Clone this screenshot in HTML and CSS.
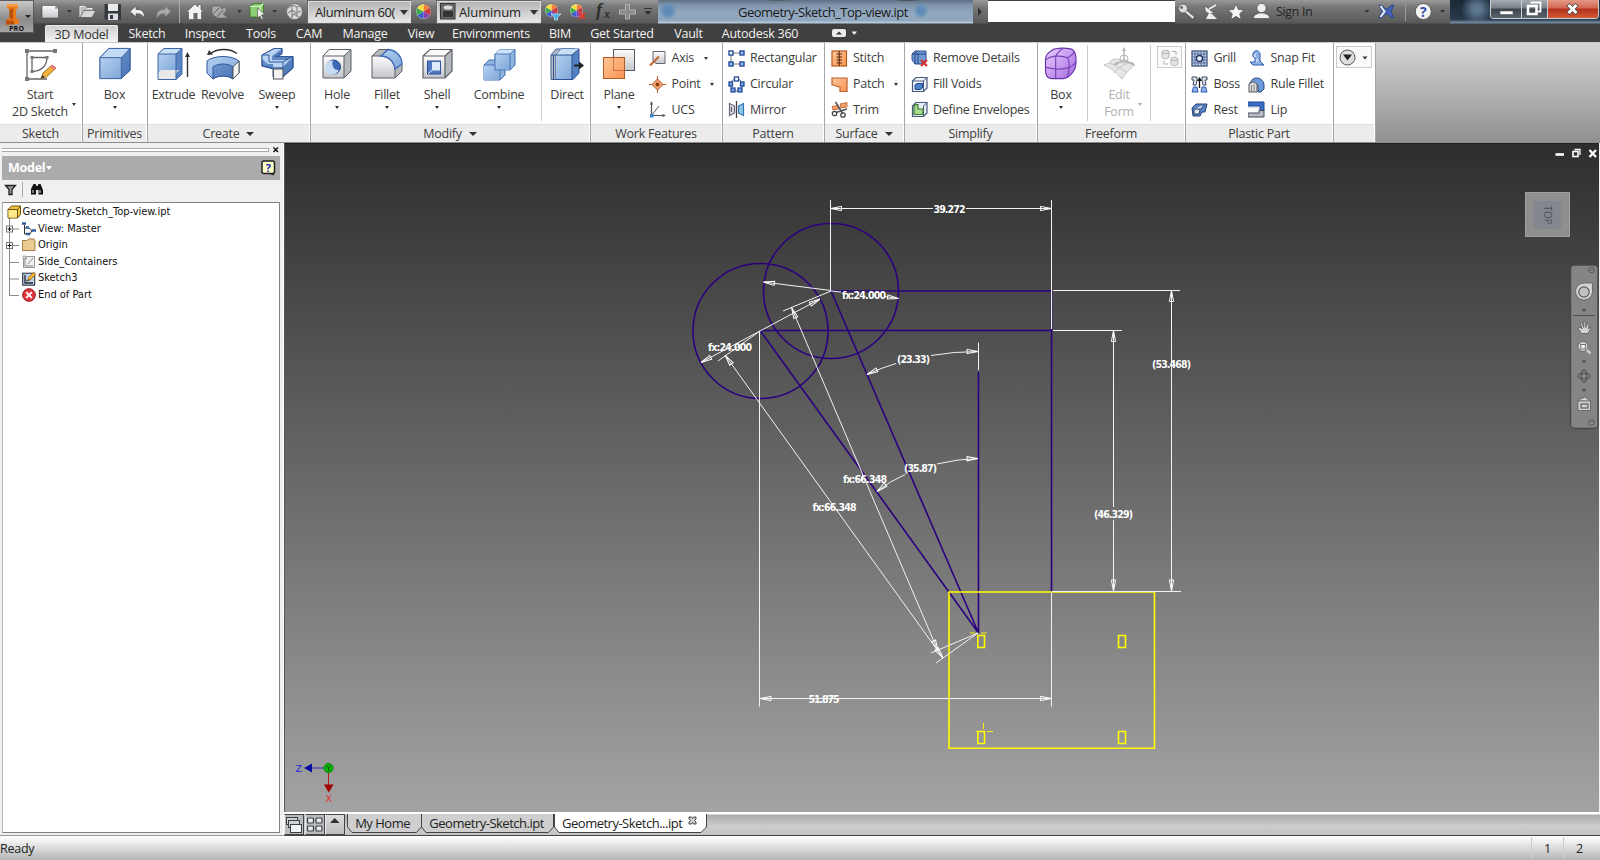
FILE: index.html
```html
<!DOCTYPE html>
<html lang="en">
<head>
<meta charset="utf-8">
<title>Geometry-Sketch_Top-view.ipt</title>
<link rel="stylesheet" href="styles.css">
</head>
<body>
<svg width="0" height="0" class="defs">
  <defs>
    <linearGradient id="blue" x1="0" y1="0" x2="1" y2="1"><stop offset="0" stop-color="#b4d0f0"/><stop offset="1" stop-color="#7fa6d8"/></linearGradient>
    <linearGradient id="blueD" x1="0" y1="0" x2="1" y2="1"><stop offset="0" stop-color="#6f97d0"/><stop offset="1" stop-color="#4a74b4"/></linearGradient>
    <linearGradient id="metal" x1="0" y1="0" x2="0" y2="1"><stop offset="0" stop-color="#fdfdfd"/><stop offset="1" stop-color="#c3c6ca"/></linearGradient>
    <linearGradient id="orange" x1="0" y1="0" x2="1" y2="1"><stop offset="0" stop-color="#ffc79a"/><stop offset="1" stop-color="#f79352"/></linearGradient>
    <linearGradient id="purple" x1="0" y1="0" x2="1" y2="1"><stop offset="0" stop-color="#ead0ff"/><stop offset="1" stop-color="#a468e0"/></linearGradient>
    <symbol id="wheel" viewBox="0 0 18 18">
      <circle cx="9" cy="9" r="8.3" fill="#eee" stroke="#555"/>
      <path d="M9 9V1.500A7.500 7.500 0 0 1 15.500 5.200Z" fill="#f0813a"/>
      <path d="M9 9L15.500 5.200A7.500 7.500 0 0 1 15.500 12.800Z" fill="#c93a3a"/>
      <path d="M9 9L15.500 12.800A7.500 7.500 0 0 1 9 16.500Z" fill="#8b3fb5"/>
      <path d="M9 9V16.500A7.500 7.500 0 0 1 2.500 12.800Z" fill="#3b5fd0"/>
      <path d="M9 9L2.500 12.800A7.500 7.500 0 0 1 2.500 5.200Z" fill="#3fae4c"/>
      <path d="M9 9L2.500 5.200A7.500 7.500 0 0 1 9 1.500Z" fill="#f3dc42"/>
    </symbol>
    <marker id="arr" viewBox="-13 -4 15 8" refX="0" refY="0" markerWidth="15" markerHeight="8" markerUnits="userSpaceOnUse" orient="auto-start-reverse"><path d="M0 0L-11 -2.100V2.100Z" fill="none" stroke="#fff" stroke-width="1"/></marker>
  </defs>
</svg>

<header class="titlebar">
  <div class="appbtn">
    <svg width="33" height="33" viewBox="0 0 33 33">
      <path d="M7 3H18V7L16 8.500V17L19 19V23H14L6 23.500V19L9.500 17V8.500L7 7Z" fill="#e87a1c"/>
      <path d="M9.500 8.500L13 7V19L9.500 17ZM6 19L14 20V23.500H6Z" fill="#b9500d"/>
      <path d="M7 3H18V5.500H7Z" fill="#ff9d42"/>
      <path d="M25 14H31L28 17Z" fill="#223"/>
    </svg>
    <span class="pro">PRO</span>
  </div>
  <svg class="strip" width="274" height="24" viewBox="34 0 274 24">
    <path d="M42 5.500H55L58.500 9V18H42Z" fill="url(#metal)" stroke="#444" stroke-width=".6"/><path d="M55 5.500V9H58.500Z" fill="#aaa"/>
    <path d="M67 10H72L69.500 13Z" fill="#3a3a3a"/>
    <path d="M80 17V6.500H85L87 8.500H92V10.500" fill="#b9b9b9" stroke="#eee"/><path d="M80 17.500L84 10.500H96L92 17.500Z" fill="#d8d8d8" stroke="#444" stroke-width=".6"/>
    <path d="M104.500 4H121V20H106L104.500 18.500Z" fill="#35383d"/><rect x="108" y="4" width="10" height="7" fill="#e9e9e9"/><rect x="108" y="13.500" width="10" height="6.500" fill="#d9dce0"/><rect x="110" y="15" width="3" height="4" fill="#35383d"/>
    <path d="M130 11.500L136 6V9.500C142 9 145 12 144 18C142.500 14.500 140 13.500 136 13.800V17Z" fill="#eee" stroke="#444" stroke-width=".6"/>
    <path d="M171 11.500L165 6V9.500C159 9 156 12 157 18C158.500 14.500 161 13.500 165 13.800V17Z" fill="#a9a9a9" stroke="#777" stroke-width=".6"/>
    <path d="M179.500 0V23" stroke="#a8a8a8"/>
    <path d="M186.500 12L195 4L198 7V4.500H201V9.500L203.500 12H201.500V19.500H188.500V12Z" fill="#f2f2f2" stroke="#444" stroke-width=".6"/><rect x="193.500" y="13" width="4" height="6.500" fill="#666"/>
    <path d="M212 6H219L222 9L226 6V12L223 14L228 18H217L212 14Z" fill="#a9a9a9" stroke="#5c5c5c" stroke-width=".6"/><path d="M213 14L219 8M217 17L223 10" stroke="#5c5c5c"/>
    <path d="M237 10H242L239.500 13Z" fill="#3a3a3a"/>
    <path d="M250 6L254 3.500H263.500V14L260 17H250Z" fill="#8ccf70" stroke="#2e6b20" stroke-width=".8"/><path d="M250 6.500H260V17M260 6.500L263.500 3.500" fill="none" stroke="#d6f5c8" stroke-width="1.200"/>
    <path d="M257.500 8L265 14.500L261.500 15L263.500 19L261.500 19.500L260 16L257.500 18Z" fill="#eee" stroke="#444" stroke-width=".6"/>
    <path d="M272 10H277L274.500 13Z" fill="#3a3a3a"/>
    <circle cx="294.500" cy="11.500" r="8" fill="#dadada" stroke="#6c6c6c"/><path d="M288 8L292 5L297 7L301 6M288 13L292 10L296 13L301 11M291 17L294 14L299 17M292 5V18M297 7V17" fill="none" stroke="#888" stroke-width="1.100"/>
  </svg>
  <div class="combo c1"><span>Aluminum 60(</span><i class="dd"></i></div>
  <svg class="strip" width="26" height="24"><use href="#wheel" x="4" y="3" width="17" height="17"/></svg>
  <div class="combo c2">
    <svg width="16" height="18"><rect x=".5" y=".5" width="14.500" height="15.500" fill="#6a6a6a" stroke="#333"/><ellipse cx="8" cy="4.500" rx="4.500" ry="2" fill="#ddd"/><rect x="3" y="8" width="10" height="6" fill="#333"/></svg>
    <span>Aluminum</span><i class="dd"></i></div>
  <svg class="strip" width="117" height="24" viewBox="541 0 117 24">
    <use href="#wheel" x="544" y="3" width="15" height="15"/><path d="M551 14H561L557.500 17V20H554.500V17Z" fill="#35b6ea" stroke="#eee" stroke-width=".6"/>
    <use href="#wheel" x="569" y="3" width="15" height="15"/><path d="M579 13L585 19M585 13L579 19" stroke="#e23b2a" stroke-width="2"/>
    <text x="596" y="16" class="fx">f</text><text x="604" y="18" class="fx sm">x</text>
    <path d="M625.500 4.500H629.500V10H635.500V14H629.500V19H625.500V14H619.500V10H625.500Z" fill="#8a8a8a" stroke="#b2b2b2"/>
    <path d="M644 8.500H652" stroke="#333"/><path d="M644.500 11H651.500L648 15Z" fill="#333"/>
  </svg>
  <div class="glass">Geometry-Sketch_Top-view.ipt</div>
  <svg class="strip" width="15" height="24"><path d="M5 7.500V16L9 11.700Z" fill="#333"/></svg>
  <div class="search"></div>
  <div class="strip user">
    <svg width="101" height="24" viewBox="1175 0 101 24">
      <circle cx="1183" cy="8.500" r="4.500" fill="#ddd" stroke="#444" stroke-width=".7"/><circle cx="1181.500" cy="7.500" r="1.400" fill="#666"/><path d="M1186 11.500L1194 18.500" stroke="#444" stroke-width="4"/><path d="M1186 11.500L1193.500 18" stroke="#ddd" stroke-width="2.600"/>
      <path d="M1205 6C1204 12 1208 15 1214 13Z" fill="#eee" stroke="#444" stroke-width=".6"/><path d="M1209 9L1216 5" stroke="#eee" stroke-width="1.500"/><path d="M1209 13L1206 19H1217L1212 14Z" fill="#eee"/>
      <path d="M1236 4L1238.300 9.500L1244 10L1239.700 13.700L1241 19.500L1236 16.300L1231 19.500L1232.300 13.700L1228 10L1233.700 9.500Z" fill="#f4f4f4" stroke="#444" stroke-width=".6"/>
      <circle cx="1261.500" cy="8" r="4.600" fill="#eee" stroke="#444" stroke-width=".6"/><path d="M1253.500 18.500C1253.500 14 1257 14.500 1259 13H1264C1266 14.500 1269.500 14 1269.500 18.500Z" fill="#eee" stroke="#444" stroke-width=".6"/>
    </svg>
    <span>Sign In</span>
  </div>
  <svg class="strip" width="90" height="24" viewBox="1360 0 90 24">
    <path d="M1364.500 10H1369.500L1367 13Z" fill="#3a3a3a"/>
    <path d="M1379 5C1384 5 1384 9 1386.500 9C1389 9 1389 5 1394 5L1391 11.500L1394 18C1389 18 1389 14 1386.500 14C1384 14 1384 18 1379 18L1382 11.500Z" fill="#3f62b8" stroke="#28407e" stroke-width=".8"/><path d="M1380.500 6L1384.500 11.500L1380.500 17" fill="none" stroke="#e9edf6" stroke-width="2"/>
    <path d="M1405.500 3V21" stroke="#999"/>
    <circle cx="1423.300" cy="11.500" r="8" fill="#f3f3f3" stroke="#555"/><text x="1423.300" y="16.500" class="q">?</text>
    <path d="M1440 10H1445L1442.500 13Z" fill="#333"/>
  </svg>
  <div class="glass dark">
    <div class="winbtns">
      <span class="wb"><svg width="29" height="18"><rect x="9" y="11" width="13" height="3.500" fill="#fff" stroke="#555" stroke-width=".6"/></svg></span>
      <span class="wb mid"><svg width="25" height="18"><path d="M8.500 2.500H18.500V11.500H16" fill="none" stroke="#fff" stroke-width="1.800"/><path d="M6 6H14.500V14H6Z" fill="none" stroke="#fff" stroke-width="2.600"/></svg></span>
      <span class="wb close"><svg width="49" height="18"><path d="M20 4.500L29 13.500M29 4.500L20 13.500" stroke="#444" stroke-width="4.400"/><path d="M20.500 5L28.500 13M28.500 5L20.500 13" stroke="#fff" stroke-width="3"/></svg></span>
    </div>
  </div>
</header>

<nav class="tabs">
  <span></span><b>3D Model</b><span>Sketch</span><span>Inspect</span><span>Tools</span><span>CAM</span><span>Manage</span><span>View</span><span>Environments</span><span>BIM</span><span>Get Started</span><span>Vault</span><span>Autodesk 360</span>
  <svg width="60" height="18"><rect x="25" y="5" width="14" height="8" rx="2" fill="#e9e9ee"/><path d="M29 10.500H35L32 7.500Z" fill="#333"/><path d="M44.500 7.500H50L47.200 11Z" fill="#eee"/></svg>
</nav>

<section class="ribbon">
  <div class="panel p-sketch"><div class="body">
    <div class="big"><svg width="34" height="34" viewBox="0 0 34 34"><path d="M4 4H31.500M4 4V32H24" fill="none" stroke="#666" stroke-width="1.300"/><path d="M9 10.500H24C24 18 19 24.500 9 24.500Z" fill="none" stroke="#666" stroke-width="1.300"/><g fill="#777"><rect x="2" y="2" width="4" height="4"/><rect x="30" y="2" width="4" height="4"/><rect x="2" y="30" width="4" height="4"/><rect x="7.500" y="9" width="3" height="3"/><rect x="22.500" y="9" width="3" height="3"/><rect x="7.500" y="23" width="3" height="3"/></g><path d="M18 31.500L20 26L29 18L33 21L23.500 30Z" fill="#f3b13c" stroke="#8a5a18" stroke-width=".8"/><path d="M29 18L33 21L31 23L27 19.800Z" fill="#e78"/><path d="M18 31.500L19.500 28L21.500 30Z" fill="#333"/></svg>
      <span>Start<br>2D Sketch</span><i class="dn side"></i></div>
  </div><footer>Sketch</footer></div>

  <div class="panel p-prim"><div class="body">
    <div class="big"><svg width="34" height="34" viewBox="0 0 35 35"><path d="M2 11L11 1.500H33V24L24 32.500H2Z" fill="url(#blueD)" stroke="#3f66a6"/><path d="M2 11L11 1.500H33L24 11Z" fill="#c2dcf5"/><path d="M2 11H24V32.500H2Z" fill="url(#blue)"/><path d="M2 11L11 1.500H33V24L24 32.500H2ZM2 11H24V32.500M24 11L33 1.500" fill="none" stroke="#3f66a6"/></svg><span>Box</span><i class="dn"></i></div>
  </div><footer>Primitives</footer></div>

  <div class="panel p-create"><div class="body">
    <div class="big w48"><svg width="34" height="34" viewBox="0 0 34 34"><path d="M1 7L7 1.500H25V27L19 32.500H1Z" fill="#5c85c2"/><path d="M1 7H19V26H1Z" fill="url(#blue)"/><path d="M1 7L7 1.500H25L19 7Z" fill="#c9e0f6"/><path d="M1 26L4 23H22L19 27V32.500H1Z" fill="#e9e9e9"/><path d="M1 7L7 1.500H25V27L19 32.500H1ZM1 7H19V32.500M19 7L25 1.500" fill="none" stroke="#3f66a6"/><path d="M30.500 30V8" stroke="#333" stroke-width="1.400"/><path d="M28 10L30.500 5L33 10Z" fill="#333"/></svg><span>Extrude</span></div>
    <div class="big w49"><svg width="34" height="34" viewBox="0 0 34 34"><path d="M1 14C8 8 26 8 33 14V26L27 32C22 28 12 28 7 32L1 26Z" fill="url(#blue)" stroke="#31589b"/><path d="M7 20C12 16 22 16 27 20V32C22 28 12 28 7 32Z" fill="url(#blueD)" stroke="#31589b"/><path d="M27 20L33 14V26L27 32Z" fill="#f4f4f4" stroke="#555"/><path d="M31 6.500C24 1 12 1 4 6.500" fill="none" stroke="#333" stroke-width="1.500"/><path d="M1 8L3 3L7 7.500Z" fill="#333"/></svg><span>Revolve</span></div>
    <div class="big w60"><svg width="34" height="34" viewBox="0 0 34 34"><path d="M2 8L14 1.500H22V7L18 9.500H33V21L23 30H13V22L2 19Z" fill="url(#blueD)" stroke="#31589b"/><path d="M2 8L14 1.500H22L12 9V13H27L33 9.500L23 20H13V17H8L2 12Z" fill="#b9d3f0"/><path d="M2 8L14 1.500H22V5L15 9.500H33V21L23 29M2 8V19L13 21M2 8H9V15H23L33 9.500M23 15V22" fill="none" stroke="#31589b"/><rect x="13.500" y="22" width="9.500" height="10" fill="#f2f2f2" stroke="#555"/></svg><span>Sweep</span><i class="dn"></i></div>
  </div><footer>Create <i class="fd"></i></footer></div>

  <div class="panel p-modify"><div class="body">
    <div class="big w50"><svg width="34" height="34" viewBox="0 0 34 34"><path d="M3 9L9 2.500H31V24L24 31H3Z" fill="#b5b8bd"/><path d="M3 9H24V31H3Z" fill="url(#metal)"/><path d="M3 9L9 2.500H31L24 9Z" fill="#fafafa"/><path d="M3 9L9 2.500H31V24L24 31H3ZM24 9V31M24 9L31 2.500M3 9H24" fill="none" stroke="#5c5f66"/><circle cx="13.500" cy="20" r="7" fill="#3d68b8" stroke="#274a8c"/><path d="M13 13.500A7 7 0 1 0 19 23C14 24 11 18 13 13.500Z" fill="#c6dcf4"/></svg><span>Hole</span><i class="dn"></i></div>
    <div class="big w50"><svg width="34" height="34" viewBox="0 0 34 34"><path d="M2 9L9 2.500H19C26 3 32 9 32 17V24L25 31H2Z" fill="#b5b8bd"/><path d="M2 31V9H11C19 10 24 15 25 22V31Z" fill="url(#metal)" stroke="#5c5f66"/><path d="M11 9L18 2.500C26 3 32 9 32 17L25 22C24 14 18 9 11 9Z" fill="url(#blue)" stroke="#3c6abf" stroke-width="1.300"/><path d="M2 9L9 2.500H18M32 17V24L25 31" fill="none" stroke="#5c5f66"/></svg><span>Fillet</span><i class="dn"></i></div>
    <div class="big w50"><svg width="34" height="34" viewBox="0 0 34 34"><path d="M3 9L10 2.500H32V24L25 31H3Z" fill="#b5b8bd"/><path d="M3 9H25V31H3Z" fill="url(#metal)"/><path d="M3 9L10 2.500H32L25 9Z" fill="#fafafa"/><path d="M3 9L10 2.500H32V24L25 31H3ZM25 9V31M25 9L32 2.500M3 9H25" fill="none" stroke="#5c5f66" stroke-width="1.200"/><rect x="7.500" y="14" width="13" height="13" fill="#4f78c0" stroke="#2e5299"/><rect x="12" y="15" width="8" height="8" fill="#dcebf9"/><path d="M8 27L12 23H20" fill="none" stroke="#dcebf9"/></svg><span>Shell</span><i class="dn"></i></div>
    <div class="big w74"><svg width="34" height="34" viewBox="0 0 34 34"><path d="M13 7L18 2.500H33V18L28 23H23V28L18 33H2V18L7 13H13Z" fill="#8fb4de" stroke="#4470b4"/><path d="M2 18H13V23H18V33H2Z" fill="url(#blue)"/><path d="M13 7H28V23H13Z" fill="url(#blue)"/><path d="M13 7L18 2.500H33L28 7Z" fill="#cfe3f7"/><path d="M13 7H28V23M28 7L33 2.500M13 7V18H2M13 18V23H23M18 23V33" fill="none" stroke="#4470b4" stroke-width=".9"/></svg><span>Combine</span><i class="dn"></i></div>
    <i class="vsep"></i>
    <div class="big w50"><svg width="34" height="34" viewBox="0 0 34 34"><path d="M1 8L6 2H25V27L20 32.500H1Z" fill="#b7bcc4" stroke="#3d5f94"/><path d="M6 8L11 2H29V26L23 32.500H6Z" fill="#5580c2" stroke="#2d5294"/><path d="M6 8H22V32H6Z" fill="url(#blue)"/><path d="M6 8L11 2H29L22 8Z" fill="#c9dff5"/><path d="M1 8H22V32M22 8L29 2M3.500 8V32" fill="none" stroke="#2d5294"/><path d="M24 18.500H30" stroke="#222" stroke-width="2"/><path d="M29 14.500L34 18.500L29 22.500Z" fill="#222"/></svg><span>Direct</span></div>
  </div><footer>Modify <i class="fd"></i></footer></div>

  <div class="panel p-work"><div class="body">
    <div class="big w56"><svg width="34" height="34" viewBox="0 0 34 34"><rect x="11.500" y="2.500" width="21" height="21" fill="url(#metal)" stroke="#555c66"/><rect x="1.500" y="10.500" width="21" height="21" fill="url(#orange)" stroke="#b45a20"/><path d="M11.500 10.500V23.500H22.500" fill="none" stroke="#b9602a" stroke-opacity=".7"/></svg><span>Plane</span><i class="dn"></i></div>
    <div class="col">
      <div class="row"><svg width="17" height="17"><path d="M4 1.500H16V13.500H7L4 11Z" fill="url(#metal)" stroke="#667"/><path d="M1 15.500L10 6.500" stroke="#c4622c" stroke-width="2"/></svg><span>Axis</span><i class="dr"></i></div>
      <div class="row"><svg width="17" height="17"><path d="M8.500 0V17M0 8.500H17" stroke="#b8622e"/><path d="M8.500 3L14 8.500L8.500 14L3 8.500Z" fill="#f6a878" stroke="#a9501c"/><circle cx="8.500" cy="8.500" r="2" fill="#8a3c10"/></svg><span>Point</span><i class="dr"></i></div>
      <div class="row"><svg width="17" height="17"><path d="M2.500 1V14.500H16" fill="none" stroke="#555" stroke-width="1.200"/><path d="M2.500 14.500L10 5" stroke="#555"/><path d="M1 3.500L2.500 0L4 3.500M13.500 13L17 14.500L13.500 16" fill="#555"/><rect x="1" y="13" width="3.500" height="3.500" fill="#3787d8"/></svg><span>UCS</span></div>
    </div>
  </div><footer>Work Features</footer></div>

  <div class="panel p-pattern"><div class="body"><div class="col">
    <div class="row"><svg width="17" height="17"><path d="M3 3H14M3 3V14H14" fill="none" stroke="#777"/><g fill="#fff" stroke="#234a9c" stroke-width="1.400"><rect x="1" y="1" width="4" height="4"/><rect x="12" y="1" width="4" height="4" fill="#9cc0f0"/><rect x="1" y="12" width="4" height="4" fill="#9cc0f0"/><rect x="12" y="12" width="4" height="4" fill="#9cc0f0"/></g></svg><span>Rectangular</span></div>
    <div class="row"><svg width="17" height="17"><circle cx="8.500" cy="9" r="6" fill="none" stroke="#456"/><g fill="#7ea6e4" stroke="#234a9c" stroke-width="1.300"><rect x="6.500" y="1" width="4" height="4" fill="#fff"/><rect x="1" y="6" width="3.500" height="4"/><rect x="12.500" y="6" width="3.500" height="4"/><rect x="3" y="12" width="4" height="4"/><rect x="10" y="12" width="4" height="4"/></g></svg><span>Circular</span></div>
    <div class="row"><svg width="17" height="17"><path d="M1.500 2.500L6.500 5V12L1.500 14.500ZM3.500 6V11" fill="#ddd" stroke="#667" stroke-width="1.200"/><path d="M8.500 0V17" stroke="#444" stroke-width="1.300"/><path d="M15.500 2.500L10.500 5V12L15.500 14.500Z" fill="#8fc4ea" stroke="#3477b0" stroke-width="1.200"/></svg><span>Mirror</span></div>
  </div></div><footer>Pattern</footer></div>

  <div class="panel p-surface"><div class="body"><div class="col">
    <div class="row"><svg width="17" height="17"><rect x="1" y="1" width="14.500" height="15" fill="url(#orange)" stroke="#b55a1e" stroke-width="1.200"/><path d="M8.200 1V16M5.500 4H11M5.500 7H11M5.500 10H11M5.500 13H11" stroke="#5a2c10" stroke-width="1.100"/></svg><span>Stitch</span></div>
    <div class="row"><svg width="17" height="17"><path d="M1 2H16V15.500H9V11C5 11 5 9 1 9Z" fill="url(#orange)" stroke="#b9602a" stroke-width="1.200"/></svg><span>Patch</span><i class="dr"></i></div>
    <div class="row"><svg width="17" height="17"><path d="M1 5.500L6 4.500L8 8L2 9ZM9 3L16 1.500V6L10 7Z" fill="#f5a06a" stroke="#b9602a" stroke-width=".8"/><path d="M4.500 1L11.500 12M16 8L5 11.500" stroke="#555" stroke-width="1.600"/><circle cx="3.500" cy="12.500" r="2.200" fill="none" stroke="#444" stroke-width="1.300"/><circle cx="12" cy="14" r="2.200" fill="none" stroke="#444" stroke-width="1.300"/></svg><span>Trim</span></div>
  </div></div><footer>Surface <i class="fd"></i></footer></div>

  <div class="panel p-simplify"><div class="body"><div class="col">
    <div class="row"><svg width="17" height="17"><path d="M1 4L4 1H15V9L13 14H4L1 10Z" fill="#7099d4" stroke="#2c4f8e"/><path d="M4 4H15M4 4V14M7 4V14M1 4H4L6 1" fill="none" stroke="#25427a"/><path d="M10 10L16 16M16 10L10 16" stroke="#d0302a" stroke-width="2.200"/></svg><span>Remove Details</span></div>
    <div class="row"><svg width="17" height="17"><path d="M1.500 5L5 1.500H16V12L12.500 15.500H1.500Z" fill="#f3f5f8" stroke="#465a7c" stroke-width="1.200"/><path d="M1.500 5H12.500V15.500M12.500 5L16 1.500" fill="none" stroke="#465a7c"/><path d="M4 9L6 7.500H11.500V12L9.500 13.500H4Z" fill="#4f80cc" stroke="#1d4490"/></svg><span>Fill Voids</span></div>
    <div class="row"><svg width="17" height="17"><path d="M1.500 5L5 1.500H16V12L12.500 15.500H1.500Z" fill="#e6edf5" stroke="#465a7c" stroke-width="1.200"/><path d="M12.500 5V15.500M12.500 5L16 1.500" stroke="#465a7c"/><path d="M3 5L5 3.500H7V8H12V13.500H3Z" fill="#a8dc90" stroke="#3b7d2c" stroke-width="1.200"/></svg><span>Define Envelopes</span></div>
  </div></div><footer>Simplify</footer></div>

  <div class="panel p-free"><div class="body">
    <div class="big w46"><svg width="34" height="34" viewBox="0 0 35 35"><path d="M8 3.500C12 .5 26 .5 30 3C34 7 33.500 20 31 24C28 29 25 32 20 32.500H8C2 32 1.500 28 1.500 22V14C1.500 8 4 6 8 3.500Z" fill="url(#purple)" stroke="#6a35a8" stroke-width="1.200"/><path d="M2 13C8 8 20 9 24 11C27 15 26 28 23 32M24 11C28 9 31 6 31 4M12 32C12 22 12 12 12 10C13 6 18 2 20 1.500M2 21C10 23 20 23 26 21C30 19 33 16 33 15" fill="none" stroke="#7a44b8" stroke-width="1.200"/></svg><span>Box</span><i class="dn"></i></div>
    <i class="vsep gapl"></i>
    <div class="big w62 off"><svg width="34" height="34" viewBox="0 0 34 34"><path d="M2 18C7 17 9 13 12 12C18 12 24 15 33 18C29 21 24 25 20 32C15 26 10 22 2 18Z" fill="#e6e6e6" stroke="#c4c4c4"/><path d="M7 16C15 18 21 23 25 26M27 16C20 18 14 23 11 26" fill="none" stroke="#c4c4c4"/><path d="M22 3V13M22 13L14 17M22 13L31 17" stroke="#b4b4b4" stroke-width="1.400"/><circle cx="22" cy="12" r="4" fill="none" stroke="#b4b4b4"/><path d="M20 4L22 0L24 4ZM11 18L15 14.500L16 17.500ZM33 18.500L29 17.500L30.500 14.500Z" fill="#b4b4b4"/></svg><span>Edit<br>Form</span><i class="dn side"></i></div>
    <i class="vsep"></i>
    <div class="minibox"><svg width="24" height="22"><g fill="#e4e4e4" stroke="#b4b4b4"><path d="M4 5V10C4 12 11 12 11 10V5"/><ellipse cx="7.500" cy="5" rx="3.500" ry="1.700"/><path d="M13 12V17C13 19 20 19 20 17V12"/><ellipse cx="16.500" cy="12" rx="3.500" ry="1.700"/></g><path d="M14 4.500H18V8M6 13.500V17H10" fill="none" stroke="#b4b4b4"/></svg></div>
  </div><footer>Freeform</footer></div>

  <div class="panel p-plastic"><div class="body">
    <div class="col a">
      <div class="row"><svg width="17" height="17"><rect x="1" y="1" width="15" height="15" fill="#c5d6ee" stroke="#33486e" stroke-width="1.200"/><path d="M4 1V16M7 1V16M10 1V16M13 1V16M1 4H16M1 7H16M1 10H16M1 13H16" stroke="#4a6290" stroke-width=".9"/><circle cx="8.500" cy="8.500" r="3" fill="#e9f0fa" stroke="#20365f" stroke-width="1.300"/></svg><span>Grill</span></div>
      <div class="row"><svg width="17" height="17"><path d="M1 1H6V4L5 9H2L3 4H1ZM16 1H11V4L12 9H15L14 4H16Z" fill="#dfe4ec" stroke="#3f4c66"/><path d="M8.500 12V3" stroke="#111" stroke-width="1.300"/><path d="M6 5L8.500 1L11 5Z" fill="#111"/><path d="M2.500 11H6L7 16H1ZM11 11H14.500L16 16H10Z" fill="#8fb4f0" stroke="#2c56ac"/></svg><span>Boss</span></div>
      <div class="row"><svg width="17" height="17"><path d="M1 7L5 3H16L14 11H11L9 15H2Z" fill="#5a84c8" stroke="#2b426e"/><path d="M3 8H10L13 4M3 8V13H8L9 9" fill="#dfe6f0" stroke="#2b426e"/></svg><span>Rest</span></div>
    </div>
    <div class="col b">
      <div class="row"><svg width="17" height="17"><path d="M7 1C10 0 12 2 12 4V11L16 15H5L2 12H7V8C4 7 4 3 7 1Z" fill="#8db2e8" stroke="#305ba8"/><path d="M7 4V7M9 9V12" stroke="#fff"/></svg><span>Snap Fit</span></div>
      <div class="row"><svg width="17" height="17"><path d="M1 8L5 3C10 0 16 4 16 9V13L13 16H10V10C10 7 5 7 5 10" fill="#6d9adb" stroke="#26488a"/><path d="M1 8L4 6C8 6 9 8 9 10V16H1Z" fill="#dcdcdc" stroke="#555"/><path d="M3.500 9V16M6 8V16" stroke="#888"/></svg><span>Rule Fillet</span></div>
      <div class="row"><svg width="17" height="17"><path d="M0 1H16V10H12V5H0Z" fill="#3b70c8" stroke="#1d4690"/><path d="M0 12H11V9.500H16V16H0Z" fill="#b9bcc2" stroke="#444c5a"/><path d="M0 6.500H10V9.500" fill="none" stroke="#d8dde6"/></svg><span>Lip</span></div>
    </div>
  </div><footer>Plastic Part</footer></div>

  <div class="panel p-more"><div class="body"><div class="minibox wide"><svg width="35" height="21"><circle cx="10.500" cy="10.500" r="7.500" fill="#dedede" stroke="#555"/><path d="M6 7.500H15L10.500 13.500Z" fill="#222"/><path d="M25.500 9.500H30.500L28 12.500Z" fill="#333"/></svg></div></div><footer></footer></div>
</section>

<main>
  <aside>
    <div class="grip"><i></i><svg width="8" height="8"><path d="M1.500 1.500L6 6M6 1.500L1.500 6" stroke="#111" stroke-width="1.500"/></svg></div>
    <div class="mhead"><span>Model <i></i></span><svg width="16" height="16"><rect x="1" y="1" width="12.500" height="12.500" rx="2" fill="#ffffc8" stroke="#222" stroke-width="1.500"/><path d="M9 14L13 15.500V13Z" fill="#222"/><text x="7.200" y="11.800" class="hq">?</text></svg></div>
    <div class="mtools"><svg width="50" height="20"><path d="M3.500 5.500H13.500L10 9.500V14.500H7V9.500Z" fill="#999" stroke="#222" stroke-width="1.300"/><path d="M20.500 2V17" stroke="#aaa"/><path d="M29 9L31.500 4H33.500L34.500 6H35.500L36.500 4H38.500L41 10V14.500H36.500V10H34V14.500H29V10Z" fill="#111"/><path d="M31 10V13M38 10V13" stroke="#ddd"/></svg></div>
    <div class="tree">
      <svg class="lines" width="20" height="102"><path d="M6.500 10V92.500H16M6.500 26H16M6.500 42.500H16M6.500 59.500H16M6.500 76H16" fill="none" stroke="#8a8a8a"/><g fill="#fff" stroke="#777"><rect x="3.500" y="23" width="6" height="6"/><rect x="3.500" y="39.500" width="6" height="6"/></g><path d="M4.500 26H8.500M6.500 24V28M4.500 42.500H8.500M6.500 40.500V44.500" stroke="#111"/></svg>
      <div class="node root"><svg width="15" height="14"><path d="M1 4.500L4.500 1H13.500V9.500L10.500 13H1Z" fill="#f2c53a" stroke="#6a5010"/><path d="M1.500 5H10V12.500H1.500Z" fill="#ffe98a"/><path d="M1 4.500H10.500V13M10.500 4.500L13.500 1" fill="none" stroke="#6a5010"/></svg><span>Geometry-Sketch_Top-view.ipt</span></div>
      <div class="node"><svg width="14" height="14"><path d="M0 1.500H4M4 5.500H7M4 12H8M10 8.500H14" stroke="#345ea0" stroke-width="2.400"/><path d="M2.500 3V12H4M2.500 6H4M7 6L10 8.500L8 12" fill="none" stroke="#333"/></svg><span>View: Master</span></div>
      <div class="node"><svg width="14" height="14"><path d="M.5 2.500H5L6.500 1H12L13 3V12.500H.5Z" fill="#eac993" stroke="#a57f45"/></svg><span>Origin</span></div>
      <div class="node"><svg width="14" height="14"><rect x="1.500" y="1.500" width="11" height="11" fill="#f0f0f0" stroke="#999"/><path d="M3 4L5 3M3 3V11H11M6 9L11 3" fill="none" stroke="#888"/><rect x="1" y="1" width="3" height="3" fill="#ccc" stroke="#999" stroke-width=".6"/></svg><span>Side_Containers</span></div>
      <div class="node"><svg width="14" height="14"><rect x=".7" y="1.200" width="12" height="12" fill="#bcd2ea" stroke="#223"/><path d="M3 3V11H11M4.500 9L9 7" fill="none" stroke="#223" stroke-width="1.300"/><path d="M5.500 8.500L7 5L11.500 .5L13.500 2.500L8.500 7.500Z" fill="#f5b92a" stroke="#8a5a10" stroke-width=".7"/></svg><span>Sketch3</span></div>
      <div class="node"><svg width="14" height="14"><circle cx="7" cy="7" r="6.300" fill="#e0383c" stroke="#8e1418"/><path d="M4.200 4.200L9.800 9.800M9.800 4.200L4.200 9.800" stroke="#fff" stroke-width="1.900"/></svg><span>End of Part</span></div>
    </div>
  </aside>

  <div class="work">
    <svg class="canvas" width="1315" height="669" viewBox="285 144 1314 668">
      <g class="sk">
        <circle cx="831" cy="291" r="67.500"/><circle cx="760.500" cy="331" r="67.500"/>
        <path d="M831 291H1051.500V592M760.500 330.500H1051.500M831 291L978.500 633L760.500 331M978.500 372V633"/>
      </g>
      <g class="yl">
        <path d="M949 592H1154.500V748.300H949ZM977.800 635.500H984.500V647.500H977.800ZM1118.500 635.500H1125.500V647.500H1118.500ZM977.800 731.500H984.500V743.500H977.800ZM1118.500 731.500H1125.500V743.500H1118.500Z"/>
        <path class="thin" d="M970 633H975M981 633H987M983.500 723V729M976 731.500H984M987 731.500H993"/>
      </g>
      <g class="dim">
        <path d="M830.500 200V291M1051.500 200V329M1051.500 592V706.500M759.500 331V706.500M1053 290.500H1180M1053 330.500H1122M1052 591.500H1181M978.500 342.500V370M831 291L783 311M978 633L931 653M760 331L718 361M978 633L936 663M831 291L841 292"/>
        <path marker-start="url(#arr)" d="M830.500 208.500H933"/><path marker-end="url(#arr)" d="M966 208.500H1051.500"/>
        <path marker-start="url(#arr)" marker-end="url(#arr)" d="M1171.500 290.500V591"/>
        <path marker-start="url(#arr)" d="M1113.500 330.500V507"/><path marker-end="url(#arr)" d="M1113.500 520V591"/>
        <path marker-start="url(#arr)" marker-end="url(#arr)" d="M760 698.500H1051.500"/>
        <path marker-start="url(#arr)" d="M763.500 282L831 290.500"/><path marker-end="url(#arr)" d="M885 296.500L898.500 298.500"/>
        <path marker-start="url(#arr)" marker-end="url(#arr)" d="M701 362.500L820 299"/>
        <path marker-start="url(#arr)" marker-end="url(#arr)" d="M791.500 307.500L938 651"/>
        <path marker-start="url(#arr)" marker-end="url(#arr)" d="M725 355L943 658"/>
        <path marker-start="url(#arr)" d="M867 374.500Q881 368 896 363.500"/><path marker-end="url(#arr)" d="M931 355.500Q954 351.500 978 351.500"/>
        <path marker-start="url(#arr)" d="M877 491.500Q890 481 905 474.500"/><path marker-end="url(#arr)" d="M937 464Q957 459 978 458.500"/>
      </g>
      <g class="dt">
        <text x="949.500" y="212.500" textLength="32">39.272</text>
        <text x="864" y="299" textLength="44">fx:24.000</text>
        <text x="730" y="351" textLength="44">fx:24.000</text>
        <text x="913.500" y="363" textLength="33">(23.33)</text>
        <text x="920.500" y="472" textLength="33">(35.87)</text>
        <text x="865" y="483" textLength="44">fx:66.348</text>
        <text x="834.500" y="511" textLength="44">fx:66.348</text>
        <text x="1171.500" y="368" textLength="39">(53.468)</text>
        <text x="1113.500" y="517.500" textLength="39">(46.329)</text>
        <text x="824" y="702.500" textLength="31">51.875</text>
      </g>
      <g>
        <path d="M312 768H325" stroke="#3030a8"/><path d="M304 768L312 763.500V772.500Z" fill="#0a0aa0"/>
        <path d="M328.500 772V785" stroke="#b02020"/><path d="M324 784.500H333.500L328.700 792.500Z" fill="#a00000"/>
        <circle cx="328.500" cy="768" r="4.700" fill="#08b008" stroke="#067006" stroke-width=".6"/><path d="M326.500 765.500L328.500 768L330.500 765.500M328.500 768V771" fill="none" stroke="#0a5a0a"/>
        <text x="295.500" y="772" class="ax z">Z</text><text x="325.500" y="802" class="ax x">X</text>
      </g>
      <g stroke="#fff" fill="none"><path d="M1555.500 154.500H1564" stroke-width="2.600"/><rect x="1573" y="151.500" width="5" height="5" stroke-width="1.600"/><path d="M1574.500 149.500H1580V155" stroke-width="1.300"/><path d="M1589.500 150L1596 157M1596 150L1589.500 157" stroke-width="2.300"/></g>
      <rect x="1525.500" y="192.500" width="44" height="44" fill="#8f8f8f" stroke="#a0a0a0"/><rect x="1533.500" y="201" width="28" height="28" fill="#85878e"/>
      <text class="cube" transform="translate(1543.500 205.500) rotate(90)" textLength="19">TOP</text>
      <rect x="1570.500" y="265" width="27.500" height="163.500" rx="4" fill="#858585" stroke="#484848" stroke-width="1.400"/>
      <g fill="none" stroke="#505050"><circle cx="1591.500" cy="270" r="2.700" fill="#9a9a9a"/><path d="M1590.300 268.800L1592.700 271.200M1592.700 268.800L1590.300 271.200"/><circle cx="1591.500" cy="422.500" r="2.700" fill="#9a9a9a"/><path d="M1590 422H1593"/><path d="M1573 315.500H1595"/></g>
      <g fill="#d0d2d4" stroke="#5a5a5a" stroke-width=".8"><path d="M1584 283H1592.500V292A8.500 8.500 0 1 1 1584 283Z"/><circle cx="1584" cy="292" r="5.200" fill="#bfc1c3" stroke-width="1.200"/><path d="M1581.500 333.500L1578 328L1580 327L1582 329L1580.500 323L1582.300 322.500L1583.800 327.500V321.500H1585.500L1586 327.500L1587.500 323L1589 323.500L1588.500 329L1590 327L1591 328L1588 333.500Z"/><circle cx="1583" cy="346.500" r="5"/><rect x="1580.800" y="344.500" width="4.500" height="4.500" fill="#eee"/><path d="M1587 350L1590.500 353.500" stroke="#ccc" stroke-width="2.500"/><path d="M1578 401H1590.500V410.500H1578ZM1578 400L1585 397L1590 401"/><rect x="1581" y="404" width="7" height="4" stroke-width="1.200"/></g>
      <g fill="none" stroke="#585858" stroke-width="1.300"><ellipse cx="1584" cy="376" rx="6" ry="2.700"/><ellipse cx="1584" cy="376" rx="2.700" ry="6"/></g>
      <path d="M1581.500 309H1586.500L1584 312ZM1581.500 360.500H1586.500L1584 363.500ZM1581.500 389H1586.500L1584 392Z" fill="#4c4c4c"/>
    </svg>
    <div class="doctabs">
      <span class="tb"><svg width="20" height="22"><g fill="#cfd2d5" stroke="#3a4048"><rect x="1.500" y="2.500" width="11" height="7"/><rect x="3.500" y="5.500" width="11" height="7"/><rect x="5.500" y="9.500" width="11" height="8" fill="#f0f1f2"/></g></svg></span>
      <span class="tb"><svg width="20" height="22"><g fill="#e8eaec" stroke="#3a4048" stroke-width="1.200"><rect x="1.500" y="3" width="6" height="5" rx="1"/><rect x="10" y="3" width="6" height="5" rx="1"/><rect x="1.500" y="11" width="6" height="5" rx="1"/><rect x="10" y="11" width="6" height="5" rx="1"/></g></svg></span>
      <span class="tb lt"><svg width="20" height="22"><path d="M4 8H13.500L8.700 3Z" fill="#2c3238"/></svg></span>
      <div class="dtab t1"><svg width="75" height="20" viewBox="0 0 75 20"><path d="M.5 0V13L5 18.500H69.500L74.500 13V0"/></svg><span>My Home</span></div>
      <div class="dtab t2"><svg width="133" height="20" viewBox="0 0 133 20"><path d="M.5 0V13L5 18.500H127.500L132.500 13V0"/></svg><span>Geometry-Sketch.ipt</span></div>
      <div class="dtab t3 on"><svg width="153" height="20" viewBox="0 0 153 20"><path d="M.5 0V13L5 18.500H147L152.500 13V0"/></svg><span>Geometry-Sketch...ipt</span><svg class="x" width="9" height="9"><path d="M1 1H3.500L4.500 2.500L5.500 1H8V3L6.500 4.500L8 6V8H5.500L4.500 6.500L3.500 8H1V6L2.500 4.500L1 3Z" fill="#ddd" stroke="#777"/></svg></div>
    </div>
  </div>
</main>
<footer class="status"><span class="ready">Ready</span><span class="n">1</span><span class="n">2</span></footer>
</body>
</html>
```
FILE: styles.css
```css
* { box-sizing: border-box; }
body { margin: 0; width: 1600px; height: 860px; overflow: hidden; display: flex; flex-direction: column; background: #f0f0f0; font: 12.5px/16px "Open Sans", "Noto Sans", sans-serif; letter-spacing: -0.25px; color: #3c3c3c; }
svg { display: block; flex: none; }
.defs { position: absolute; }
i { font-style: normal; }

/* title bar */
.titlebar { height: 24px; display: flex; flex: none; background: #404040; white-space: nowrap; }
.appbtn { width: 34px; height: 33px; background: linear-gradient(#c9c9c9, #8b8b8b 60%, #a5a5a5); border: 1px solid #5a5a5a; border-left: 0; position: relative; z-index: 2; flex: none; }
.pro { position: absolute; left: 9px; top: 23px; font: bold 7px/9px "Open Sans", sans-serif; letter-spacing: .2px; color: #111; }
.strip { flex: none; height: 24px; background: linear-gradient(#999 0, #777 30%, #595959 96%, #404040); }
.combo { height: 22px; margin-top: 1px; flex: none; display: flex; align-items: center; background: linear-gradient(#b5b5b5, #e6e6e6); border: 1px solid #ddd; font-size: 13px; letter-spacing: -.4px; color: #222; box-shadow: 0 0 0 1px #666; }
.c1 { width: 103px; padding-left: 6px; }
.c2 { width: 104px; padding-left: 2px; gap: 3px; letter-spacing: -.1px; }
.dd { margin-left: auto; margin-right: 2px; border: 4px solid transparent; border-top: 5px solid #333; border-bottom: 0; }
.fx { font: italic bold 18px "Liberation Serif", serif; fill: #2c2c2c; }
.fx.sm { font-size: 12px; }
.q { font: bold 14px "Open Sans", sans-serif; fill: #2d4fa8; text-anchor: middle; }
.glass { width: 315px; flex: none; padding-left: 80px; line-height: 24px; font-size: 13px; letter-spacing: -.5px; color: #181818; background: radial-gradient(circle at 10px 11px, #5f8cb8 4px, transparent 9px), radial-gradient(circle at 263px 11px, #5f8cb8 3px, transparent 8px), radial-gradient(ellipse at 120px 0, #4e5c6c 2px, transparent 14px), radial-gradient(ellipse at 250px 0, #3c4858 3px, transparent 14px), linear-gradient(#5f7082 0, #7d94ac 20%, #93a9c0 55%, #90a6bc 85%, #bcd0e2 96%, #333); }
.search { width: 187px; height: 21px; margin: 1px 0 2px; flex: none; background: #fff; }
.user { width: 185px; display: flex; align-items: center; color: #222; font-size: 12.3px; line-height: 24px; }
.glass.dark { width: 150px; padding: 0 1px 0 40px; background: radial-gradient(circle at 27px 9px, #5c7690 4px, transparent 16px), linear-gradient(#1c2a38, #26384a 80%, #7d93a8 96%, #333); }
.winbtns { display: flex; height: 19px; border: 1px solid #c9cfd6; border-top: 0; border-radius: 0 0 4px 4px; overflow: hidden; }
.wb { width: 30px; background: linear-gradient(#a7adb4, #767d86 45%, #3c444e 50%, #5c646e); }
.wb.mid { width: 27px; border: solid #c9cfd6; border-width: 0 1px; }
.wb.close { width: 51px; background: linear-gradient(#e49a86, #d06550 45%, #b5301a 50%, #d65a38); }

/* ribbon tabs */
.tabs { height: 18px; flex: none; display: grid; grid-template-columns: 45px 73px 58px 58px 54px 42px 70px 42px 98px 40px 84px 49px 94px 60px; background: #404040; color: #f2f2f2; text-align: center; line-height: 20px; white-space: nowrap; }
.tabs b { font-weight: normal; color: #333; background: linear-gradient(#cfcfcf, #fafafa); border: 1px solid #eee; border-bottom: 0; border-radius: 2px 2px 0 0; margin-top: 1px; line-height: 18px; }

/* ribbon */
.ribbon { height: 101px; flex: none; display: flex; background: linear-gradient(#d4d4d4, #909090); border-top: 1px solid #c8c8c8; border-bottom: 1px solid #8c8c8c; white-space: nowrap; }
.panel { display: flex; flex-direction: column; flex: none; background: #fff; border-right: 1px solid #a6a6a6; }
.panel .body { height: 81px; display: flex; padding-top: 4px; }
.panel > footer { height: 18px; background: #ececec; margin-right: 1px; border-top: 1px solid #ddd; text-align: center; line-height: 17px; }
.p-sketch { width: 83px; }
.p-prim { width: 65px; }
.p-create { width: 163px; }
.p-create .body { padding-left: 1px; }
.p-modify { width: 280px; }
.p-modify .body { padding-left: 1px; }
.p-work { width: 132px; }
.p-pattern { width: 102px; }
.p-pattern .body { padding-left: 4.500px; }
.p-surface { width: 80px; }
.p-surface .body, .p-simplify .body { padding-left: 5.500px; }
.p-simplify { width: 133px; }
.p-free { width: 148px; }
.p-plastic { width: 148px; }
.p-plastic .body { padding-left: 5px; }
.p-more { width: 42px; }
.big { display: flex; flex-direction: column; align-items: center; text-align: center; width: 80px; position: relative; flex: none; }
.p-prim .big { width: 63px; }
.big > span { margin-top: 5px; line-height: 17px; }
.w46 { width: 46px; } .w48 { width: 49px; } .w49 { width: 49px; } .w50 { width: 50px; } .w56 { width: 56px; } .w60 { width: 60px; } .w62 { width: 62px; } .w74 { width: 74px; }
.p-modify .vsep { margin-left: 5px; }
.vsep { width: 1px; height: 76px; background: #ccc; flex: none; margin-top: -2px; }
.vsep.gapl { margin-left: 3px; }
.dn, .dr { border: 2.5px solid transparent; border-top: 3px solid #333; border-bottom: 0; width: 0; height: 0; flex: none; }
.dn { margin-top: 3px; }
.dn.side { position: absolute; right: 4px; top: 53px; }
.off .dn.side { right: 8px; }
.dr { margin-left: 4px; }
.off { color: #b0b0b0; }
.off .dn { border-top-color: #aaa; }
.fd { display: inline-block; border: 4px solid transparent; border-top: 4.5px solid #333; border-bottom: 0; margin-left: 4px; vertical-align: 2px; }
.col { display: flex; flex-direction: column; margin-top: -1.500px; }
.p-work .col { margin-left: 2px; }
.col.a { width: 57px; }
.row { height: 25.8px; display: flex; align-items: center; gap: 5.5px; }
.minibox { width: 25px; height: 22px; border: 1px solid #ccc; background: #fafafa; margin: -1px 0 0 6px; overflow: hidden; }
.minibox.wide { width: 36px; margin-left: 2px; }

/* work area */
main { height: 693px; flex: none; display: flex; }
aside { width: 284px; flex: none; padding: 0 3px 2px 2px; display: flex; flex-direction: column; border-right: 1px solid #fff; border-bottom: 1px solid #999; }
.grip { height: 13px; display: flex; align-items: center; padding: 1px 0 0; flex: none; }
.grip i { width: 267px; height: 4px; border: 1px solid #a8a8a8; border-left: 0; background: #fff; margin-right: 3px; }
.mhead { height: 24px; flex: none; background: #ababab; display: flex; align-items: center; justify-content: space-between; padding: 0 3px 0 6px; color: #fff; font: bold 12.500px "Open Sans", sans-serif; }
.mhead span { padding-bottom: 1px; }
.mhead i { display: inline-block; border: 3.5px solid transparent; border-top: 4px solid #fff; border-bottom: 0; vertical-align: 2px; margin-left: -2px; }
.hq { font: bold 11px "Open Sans", sans-serif; fill: #1c1ca0; text-anchor: middle; }
.mtools { height: 22px; flex: none; }
.tree { flex: 1; background: #fff; border: 1px solid #828282; border-left-color: #b5b5b5; position: relative; padding: 1px 0 0 18.500px; font: 11px/16.6px "DejaVu Sans Condensed", "DejaVu Sans", sans-serif; letter-spacing: -.03px; color: #111; }
.lines { position: absolute; left: 0; top: 0; }
.node { height: 16.6px; display: flex; align-items: center; gap: 2.500px; position: relative; }
.node.root { margin-left: -15px; gap: 1px; }
.work { width: 1316px; display: flex; flex-direction: column; }
.canvas { background: linear-gradient(#2e2e2e, #a3a3a3); border-left: 1px solid #555; border-top: 1px solid #222; }
.sk, .sk * { fill: none; stroke: #2b0080; stroke-width: 1.6; }
.yl path { fill: none; stroke: #ff0; stroke-width: 1.6; }
.yl .thin { stroke-width: .9; }
.dim path { fill: none; stroke: #f2f2f2; stroke-width: 1; }
.dt text { font: bold 10.5px "DejaVu Sans Condensed", "DejaVu Sans", sans-serif; letter-spacing: 0; fill: #fff; text-anchor: middle; }
.ax { font: 9.5px "DejaVu Sans", sans-serif; }
.z { fill: #2222e0; }
.x { fill: #e03030; }
.cube { font: 10px "Open Sans", sans-serif; fill: #4a4e58; }
.doctabs { height: 24px; display: flex; background: linear-gradient(#fff 0, #fff 2px, #ababab 3px, #ccc 60%, #c4c4c4); border-bottom: 1px solid #444; padding-top: 2px; font-size: 13px; letter-spacing: -.5px; color: #222; }
.tb { width: 20px; height: 21px; border: 1px solid #444; border-left-color: #eee; background: #b9bbbd; margin-right: .7px; }
.tb.lt { background: linear-gradient(#ddd, #bbb); }
.dtab { height: 20px; position: relative; display: flex; justify-content: center; line-height: 18px; white-space: nowrap; flex: none; }
.dtab > svg:first-child { position: absolute; left: 0; top: 0; }
.dtab path { fill: #cfcfcf; stroke: #444; }
.dtab.on > svg:first-child path { fill: #fff; }
.dtab span { position: relative; }
.t1 { width: 74px; margin-left: 1px; padding-right: 3px; } .t2 { width: 133px; padding-right: 2px; } .t3 { width: 153px; justify-content: flex-start; padding-left: 8px; }
.dtab .x { position: relative; margin: 2px 0 0 6px; }
.status { flex: 1; display: flex; align-items: center; background: linear-gradient(#fff, #f2f2f2 20%, #b4b4b4); font-size: 12.500px; color: #222; padding-right: 5px; }
.ready { flex: 1; padding-top: 1px; }
.n { width: 32px; text-align: center; border-left: 1px solid #ccc; line-height: 22px; padding-top: 1px; }
```
